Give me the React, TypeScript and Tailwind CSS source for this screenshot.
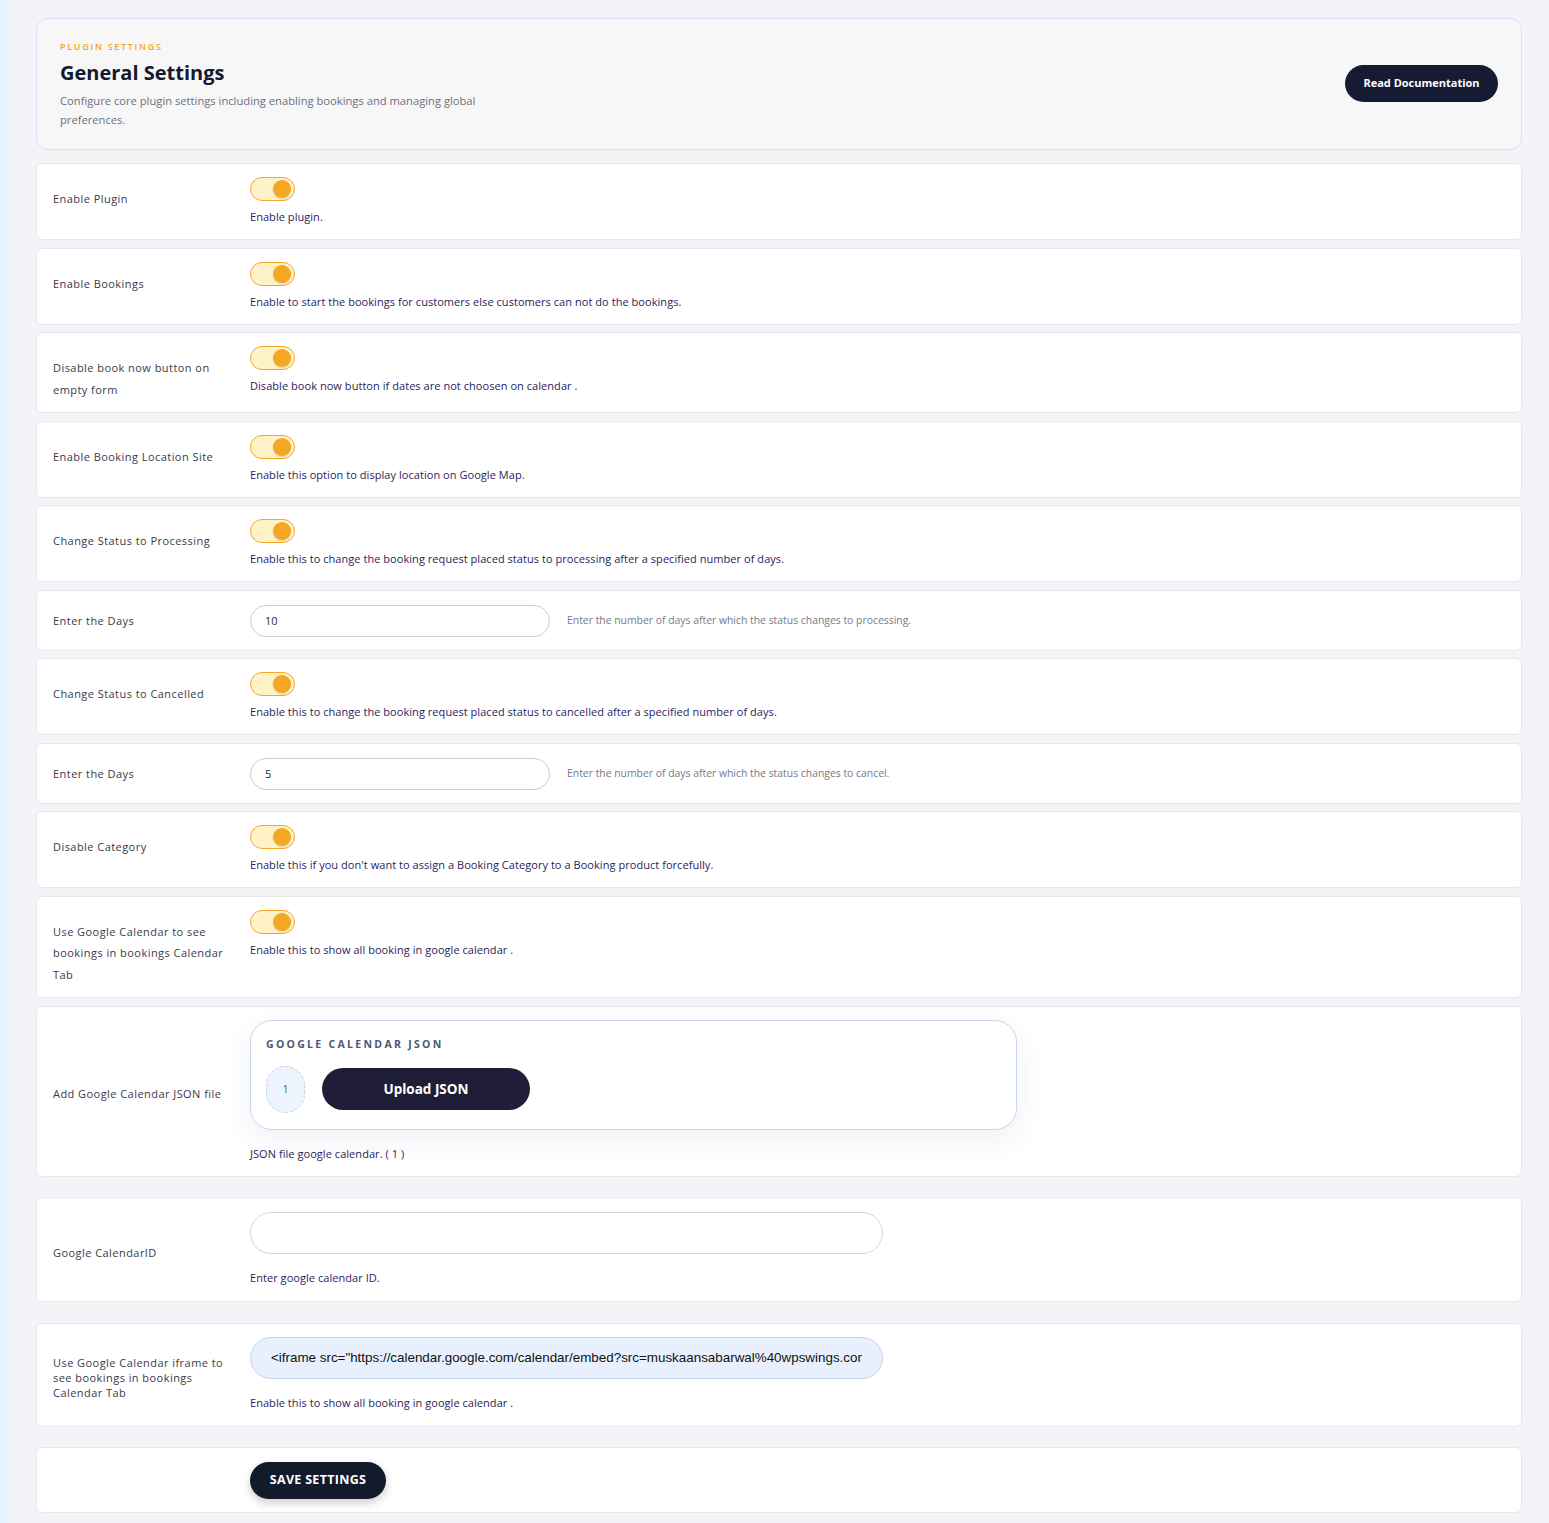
import React from "react";

type Row =
  | { kind: "toggle"; label: string; help: string }
  | { kind: "days"; label: string; value: string; help: string };

const rows: Row[] = [
  { kind: "toggle", label: "Enable Plugin", help: "Enable plugin." },
  {
    kind: "toggle",
    label: "Enable Bookings",
    help: "Enable to start the bookings for customers else customers can not do the bookings.",
  },
  {
    kind: "toggle",
    label: "Disable book now button on empty form",
    help: "Disable book now button if dates are not choosen on calendar .",
  },
  {
    kind: "toggle",
    label: "Enable Booking Location Site",
    help: "Enable this option to display location on Google Map.",
  },
  {
    kind: "toggle",
    label: "Change Status to Processing",
    help: "Enable this to change the booking request placed status to processing after a specified number of days.",
  },
  {
    kind: "days",
    label: "Enter the Days",
    value: "10",
    help: "Enter the number of days after which the status changes to processing.",
  },
  {
    kind: "toggle",
    label: "Change Status to Cancelled",
    help: "Enable this to change the booking request placed status to cancelled after a specified number of days.",
  },
  {
    kind: "days",
    label: "Enter the Days",
    value: "5",
    help: "Enter the number of days after which the status changes to cancel.",
  },
  {
    kind: "toggle",
    label: "Disable Category",
    help: "Enable this if you don't want to assign a Booking Category to a Booking product forcefully.",
  },
  {
    kind: "toggle",
    label: "Use Google Calendar to see bookings in bookings Calendar Tab",
    help: "Enable this to show all booking in google calendar .",
  },
];

const font = "font-['Open_Sans','Noto_Sans',sans-serif]";

const Toggle = () => (
  <div className="relative h-[24px] w-[45px] rounded-full border border-[#f5a623] bg-[#fdf2c8]">
    <span className="absolute right-[3px] top-[2px] h-[18px] w-[18px] rounded-full bg-[#f5a623] shadow-[0_1px_2px_rgba(0,0,0,0.15)]" />
  </div>
);

const Help = ({ children }: { children: React.ReactNode }) => (
  <p className="text-[11px] leading-[20px] tracking-[0.05px] text-[#2b1d5c]">
    {children}
  </p>
);

const Card = ({
  children,
  className = "",
}: {
  children: React.ReactNode;
  className?: string;
}) => (
  <div
    className={`flex rounded-[6px] border border-[#e6e8ef] bg-white pl-[16px] ${className}`}
  >
    {children}
  </div>
);

const Label = ({
  children,
  className = "",
}: {
  children: React.ReactNode;
  className?: string;
}) => (
  <div
    className={`w-[197px] shrink-0 pr-[20px] text-[11px] tracking-[0.45px] text-[#3a3a4a] ${className}`}
  >
    {children}
  </div>
);

export default function App() {
  return (
    <div className={`flex min-h-[1523px] bg-[#f3f4f8] ${font}`}>
      <div className="w-[9px] shrink-0 bg-[#e6f3fd]" />
      <div className="flex-1 px-[27px] pb-[11px] pt-[18px]">
        {/* page header */}
        <div className="flex items-center justify-between rounded-[12px] border border-[#ead6fb] bg-[#f7f7f8] py-[20px] pl-[23px] pr-[23px]">
          <div className="w-[470px]">
            <div className="text-[9px] font-semibold uppercase leading-[16px] tracking-[1.7px] text-[#f5a623]">
              Plugin Settings
            </div>
            <h1 className="mt-[4px] text-[20px] font-bold leading-[28px] text-[#141a2c]">
              General Settings
            </h1>
            <p className="mt-[4px] text-[11.2px] leading-[19px] text-[#6b7080]">
              Configure core plugin settings including enabling bookings and
              managing global preferences.
            </p>
          </div>
          <button className="mb-[2px] h-[37px] w-[153px] rounded-full bg-[#161b33] text-[11px] font-bold text-white">
            Read Documentation
          </button>
        </div>

        <div className="mt-[13px] flex flex-col gap-[7.5px]">
          {rows.map((row, i) =>
            row.kind === "toggle" ? (
              <Card key={i}>
                <Label className="pb-[12px] pt-[24px] leading-[21.5px]">
                  {row.label}
                </Label>
                <div className="pb-[12px] pt-[13px]">
                  <Toggle />
                  <div className="mt-[6px]">
                    <Help>{row.help}</Help>
                  </div>
                </div>
              </Card>
            ) : (
              <Card key={i} className="items-center pb-[13px] pt-[14px]">
                <Label className="leading-[20px]">{row.label}</Label>
                <input
                  readOnly
                  value={row.value}
                  className="h-[32px] w-[300px] rounded-full border border-[#cfcfd4] bg-white px-[14px] text-[11px] text-[#2a2a35] outline-none"
                />
                <span className="ml-[17px] text-[10.4px] text-[#777a85]">
                  {row.help}
                </span>
              </Card>
            )
          )}

          {/* google calendar json upload */}
          <Card>
            <Label className="self-center pt-[6px] leading-[20px]">
              Add Google Calendar JSON file
            </Label>
            <div className="pb-[12px] pt-[13px]">
              <div className="h-[110px] w-[767px] rounded-[22px] border border-[#c8d6ee] bg-white px-[15px] pt-[14px] shadow-[0_10px_30px_rgba(30,40,90,0.07)]">
                <div className="text-[10.5px] font-bold uppercase leading-[18px] tracking-[2.3px] text-[#4b5878]">
                  Google Calendar JSON
                </div>
                <div className="mt-[13px] flex items-center gap-[17px]">
                  <div className="flex h-[47px] w-[39px] items-center justify-center rounded-full border border-dashed border-[#c3d2ec] bg-[#eef4fd] text-[10px] text-[#4b5878]">
                    1
                  </div>
                  <button className="h-[42px] w-[208px] rounded-full bg-[#1f1d37] text-[13.5px] font-bold text-white">
                    Upload JSON
                  </button>
                </div>
              </div>
              <div className="mt-[14px]">
                <Help>JSON file google calendar. ( 1 )</Help>
              </div>
            </div>
          </Card>

          {/* google calendar id */}
          <Card className="mt-[13px]">
            <Label className="self-center pt-[6px] leading-[20px]">
              Google CalendarID
            </Label>
            <div className="pb-[13px] pt-[14px]">
              <input
                readOnly
                value=""
                className="h-[42px] w-[633px] rounded-full border border-[#d2d6e2] bg-white px-[20px] text-[14px] outline-none"
              />
              <div className="mt-[14px]">
                <Help>Enter google calendar ID.</Help>
              </div>
            </div>
          </Card>

          {/* google calendar iframe */}
          <Card className="mt-[13px]">
            <Label className="self-center pt-[6px] leading-[15px]">
              Use Google Calendar iframe to see bookings in bookings Calendar
              Tab
            </Label>
            <div className="pb-[13px] pt-[13px]">
              <input
                readOnly
                value={
                  '<iframe src="https://calendar.google.com/calendar/embed?src=muskaansabarwal%40wpswings.com&ctz=Asia%2FKolkata" style="border: 0" width="800" height="600"></iframe>'
                }
                className="h-[42px] w-[633px] rounded-full border border-[#c9d4ea] bg-[#e8f0fe] px-[20px] font-['Liberation_Sans',Arial,sans-serif] text-[13.4px] text-[#111] outline-none"
              />
              <div className="mt-[14px]">
                <Help>Enable this to show all booking in google calendar .</Help>
              </div>
            </div>
          </Card>

          {/* save */}
          <Card className="mt-[13px] pb-[13px] pt-[14px]">
            <div className="w-[197px] shrink-0" />
            <button className="h-[37px] w-[136px] rounded-full bg-[#131a2b] text-[12.5px] font-bold tracking-[0.3px] text-white shadow-[0_4px_10px_rgba(0,0,0,0.2)]">
              SAVE SETTINGS
            </button>
          </Card>
        </div>
      </div>
    </div>
  );
}
